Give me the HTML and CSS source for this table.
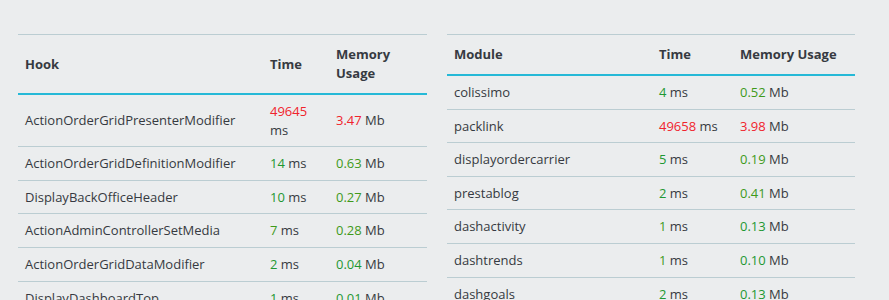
FILE: index.html
```html
<!DOCTYPE html>
<html>
<head>
<meta charset="utf-8">
<link rel="stylesheet" href="styles.css">
</head>
<body>
<div class="wrap">
  <table class="tbl tbl-hooks">
    <colgroup><col class="c1"><col class="c2"><col class="c3"></colgroup>
    <thead>
      <tr><th>Hook</th><th>Time</th><th>Memory Usage</th></tr>
    </thead>
    <tbody>
      <tr><td>ActionOrderGridPresenterModifier</td><td><span class="bad">49645</span> ms</td><td><span class="bad">3.47</span> Mb</td></tr>
      <tr><td>ActionOrderGridDefinitionModifier</td><td><span class="ok">14</span> ms</td><td><span class="ok2">0.63</span> Mb</td></tr>
      <tr><td>DisplayBackOfficeHeader</td><td><span class="ok">10</span> ms</td><td><span class="ok2">0.27</span> Mb</td></tr>
      <tr><td>ActionAdminControllerSetMedia</td><td><span class="ok2">7</span> ms</td><td><span class="ok2">0.28</span> Mb</td></tr>
      <tr><td>ActionOrderGridDataModifier</td><td><span class="ok">2</span> ms</td><td><span class="ok">0.04</span> Mb</td></tr>
      <tr><td>DisplayDashboardTop</td><td><span class="ok">1</span> ms</td><td><span class="ok">0.01</span> Mb</td></tr>
    </tbody>
  </table>
  <table class="tbl tbl-modules">
    <colgroup><col class="m1"><col class="m2"><col class="m3"></colgroup>
    <thead>
      <tr><th>Module</th><th>Time</th><th>Memory Usage</th></tr>
    </thead>
    <tbody>
      <tr><td>colissimo</td><td><span class="ok">4</span> ms</td><td><span class="ok2">0.52</span> Mb</td></tr>
      <tr><td>packlink</td><td><span class="bad">49658</span> ms</td><td><span class="bad">3.98</span> Mb</td></tr>
      <tr><td>displayordercarrier</td><td><span class="ok">5</span> ms</td><td><span class="ok2">0.19</span> Mb</td></tr>
      <tr><td>prestablog</td><td><span class="ok">2</span> ms</td><td><span class="ok2">0.41</span> Mb</td></tr>
      <tr><td>dashactivity</td><td><span class="ok2">1</span> ms</td><td><span class="ok">0.13</span> Mb</td></tr>
      <tr><td>dashtrends</td><td><span class="ok2">1</span> ms</td><td><span class="ok">0.10</span> Mb</td></tr>
      <tr><td>dashgoals</td><td><span class="ok">2</span> ms</td><td><span class="ok">0.13</span> Mb</td></tr>
    </tbody>
  </table>
</div>
</body>
</html>
```

FILE: styles.css
```css
html, body {
  margin: 0;
  padding: 0;
  background: #ebedee;
  font-family: "Open Sans", "Liberation Sans", sans-serif;
  font-size: 13px;
  color: #363a41;
}
.wrap {
  display: flex;
  align-items: flex-start;
  gap: 20px;
  padding: 34px 0 0 18px;
}
.tbl {
  border-collapse: collapse;
  table-layout: fixed;
  border-top: 1px solid #bbcdd2;
}
.tbl-hooks { width: 409px; }
.tbl-modules { width: 408px; }
.c1 { width: 245px; }
.c2 { width: 66px; }
.c3 { width: 98px; }
.m1 { width: 205px; }
.m2 { width: 81px; }
.m3 { width: 122px; }
.tbl th {
  text-align: left;
  font-weight: 700;
  line-height: 19px;
  padding: 10px 7px;
  border-bottom: 2px solid #25b9d7;
  vertical-align: middle;
}
.tbl td {
  line-height: 18.6px;
  padding: 7px 7px;
  border-bottom: 1px solid #bbcdd2;
  vertical-align: middle;
}
.bad { color: #f0242c; }
.ok { color: #1f9832; }
.ok2 { color: #3f9a1a; }
```
